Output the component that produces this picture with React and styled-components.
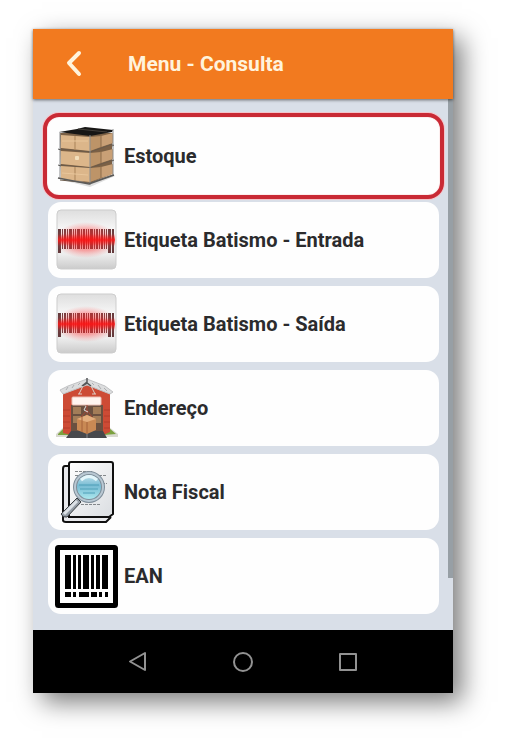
import React from "react";
import styled, { createGlobalStyle, css } from "styled-components";

const GlobalStyle = createGlobalStyle`
  *, *::before, *::after { box-sizing: border-box; }
  body {
    margin: 0;
    background: #fff;
    font-family: Roboto, "Liberation Sans", sans-serif;
  }
`;

const Page = styled.main`
  padding: 29px 73px 57px 33px;
`;

const Device = styled.section`
  display: flex;
  flex-direction: column;
  background: #d9dfe8;
  box-shadow: 9px 9px 24px rgba(0, 0, 0, 0.52);
`;

const Header = styled.header`
  position: relative;
  display: flex;
  align-items: center;
  gap: 29px;
  min-height: 70px;
  padding: 0 24px;
  background: #f27a1f;
  box-shadow: 0 1px 3px rgba(0, 0, 0, 0.55);
`;

const BackButton = styled.button`
  display: grid;
  place-items: center;
  width: 42px;
  height: 42px;
  padding: 0;
  border: 0;
  background: none;
  color: #fff3dc;
`;

const Title = styled.h1`
  margin: 0;
  color: #fff3dc;
  font-size: 21px;
  line-height: 24px;
  font-weight: 700;
`;

const Body = styled.div`
  display: flex;
`;

const List = styled.ul`
  flex: 1;
  display: flex;
  flex-direction: column;
  gap: 8px;
  margin: 0;
  padding: 19px 9px 16px 15px;
  list-style: none;
`;

const Card = styled.button`
  display: flex;
  align-items: center;
  gap: 6px;
  width: 100%;
  min-height: 76px;
  padding: 6px;
  border: 0;
  border-radius: 13px;
  background: #fefefe;
  color: #2b2b2d;
  font-family: inherit;
  font-size: 20px;
  line-height: 24px;
  font-weight: 700;
  text-align: left;
  ${({ $highlighted }) =>
    $highlighted &&
    css`
      border-radius: 11px;
      outline: 4px solid #c92a35;
      outline-offset: 1px;
      box-shadow: 0 0 0 1px #fdeeee, 0 0 0 6px #f3c5cb;
    `}
`;

const CardIcon = styled.svg`
  flex: none;
  width: 64px;
  height: 64px;
`;

const ScrollTrack = styled.div`
  width: 5px;
  padding-bottom: 52px;
`;

const ScrollThumb = styled.div`
  height: 100%;
  background: #979fa5;
`;

const NavBar = styled.nav`
  display: flex;
  justify-content: center;
  min-height: 63px;
  background: #000;
`;

const NavButton = styled.button`
  display: grid;
  place-items: center;
  width: 25%;
  padding: 0;
  border: 0;
  background: none;
  color: #929292;
`;

const Crate = ({ y }) => (
  <g>
    <path d={`M7 ${y}L36 ${y + 2}V${y + 16}L7 ${y + 13}Z`} fill="#dcb68a" />
    <path d={`M36 ${y + 2}L47 ${y + 1}V${y + 12}L36 ${y + 16}Z`} fill="#bd9468" />
    <path d={`M47 ${y + 1}L59 ${y - 2}V${y + 8}L47 ${y + 12}Z`} fill="#c9a076" />
    <path d={`M6 ${y + 14}L36 ${y + 17}L59 ${y + 9}`} fill="none" stroke="#6c5b4a" />
    <path d={`M47 ${y}V${y + 12}`} stroke="#8d6c4a" />
  </g>
);

const StockIcon = () => (
  <CardIcon viewBox="0 0 64 64" aria-hidden="true">
    <path d="M8 56L36 63L61 52L52 50Z" fill="#dedede" />
    <path d="M6 9H58V50L36 59L7 54Z" fill="#7b6045" />
    <Crate y={11} />
    <Crate y={27} />
    <Crate y={42} />
    <path d="M21 12V26M21 43V57" stroke="#a98358" />
    <path d="M8 17H34M8 49L34 51" stroke="#e8c69b" />
    <path d="M5 8L23 5L31 3L59 6L58 8L36 12Z" fill="#171615" />
    <path d="M24 5L53 8" stroke="#44403b" />
    <rect x="21" y="32" width="4" height="4" rx="1" fill="#f3dfbb" />
    <path d="M6 8V55M36 11V61M59 5V51" fill="none" stroke="#8b8d8e" />
    <path d="M4 54L35 60L60 51" fill="none" stroke="#5b5a58" strokeWidth="1.500" />
    <path d="M4 41L7 42M4 25L7 26M58 22L60 21M58 37L60 36" fill="none" stroke="#5b5a58" />
  </CardIcon>
);

const scannerBars = [
  [4, 3], [8, 1], [10, 2], [13, 1], [15, 3], [19, 1], [21, 1], [23, 3], [27, 1],
  [29, 2], [32, 1], [34, 1], [36, 3], [40, 1], [42, 2], [45, 1], [47, 2], [50, 1], [52, 1], [54, 3], [58, 2],
];

const ScannerIcon = () => (
  <CardIcon viewBox="0 0 64 64" aria-hidden="true">
    <defs>
      <linearGradient id="tile" x2="0" y2="1">
        <stop offset="0" stopColor="#dedede" />
        <stop offset="0.35" stopColor="#f8f8f8" />
        <stop offset="0.75" stopColor="#ededed" />
        <stop offset="1" stopColor="#cbcbcb" />
      </linearGradient>
      <radialGradient id="glow">
        <stop offset="0" stopColor="#ff1a1a" stopOpacity="0.75" />
        <stop offset="0.6" stopColor="#ff3434" stopOpacity="0.4" />
        <stop offset="1" stopColor="#ff6060" stopOpacity="0" />
      </radialGradient>
      <linearGradient id="beam" x2="0" y2="1">
        <stop offset="0" stopColor="#fa1515" stopOpacity="0" />
        <stop offset="0.5" stopColor="#fa1515" stopOpacity="0.9" />
        <stop offset="1" stopColor="#fa1515" stopOpacity="0" />
      </linearGradient>
    </defs>
    <rect x="3" y="2" width="59" height="59" rx="4" fill="url(#tile)" stroke="#cdcdcd" />
    {scannerBars.map(([x, w]) => (
      <rect key={x} x={x} y="21" width={w} height={x < 8 || x > 53 ? 24 : 20} fill="#653a3c" />
    ))}
    <ellipse cx="32" cy="32" rx="32" ry="18" fill="url(#glow)" />
    <rect x="4" y="26" width="57" height="12" fill="url(#beam)" />
  </CardIcon>
);

const WarehouseIcon = () => (
  <CardIcon viewBox="0 0 64 64" aria-hidden="true">
    <path d="M2 58L10 51H55L64 58V61H2Z" fill="#d8d9cf" />
    <path d="M4 58L10 52H17V59H4ZM48 52H55L62 58L50 59Z" fill="#7ba13f" />
    <path d="M9 17L33 6L56 17V56L49 59V29H17V59L9 57Z" fill="#cd4b35" />
    <path d="M9 34H16M9 40H16M9 46H16M9 52H16M50 34H56M50 40H56M50 46H56M50 52H56" stroke="#b43c2a" />
    <rect x="17" y="29" width="32" height="28" fill="#6a5040" />
    <path d="M19 31H27V38H19ZM39 31H47V38H39ZM19 40H27V47H19ZM39 40H47V47H39Z" fill="#a37d58" />
    <path d="M17 55H49L53 62H12Z" fill="#47484c" />
    <path d="M33 57V62" stroke="#85868a" />
    <path d="M6 14L14 10L33 3L51 10L59 16L56 18L33 9L9 18Z" fill="#dcddde" stroke="#c1c2c4" />
    <path d="M12 14L14 11M18 12L20 9M24 9L26 7M40 9L38 7M47 13L44 9M53 15L50 12" stroke="#adafb1" />
    <path d="M33 2V6L28 10L33 7L37 10" fill="none" stroke="#555759" strokeWidth="1.500" />
    <path d="M29 10L25 18M37 10L41 18M24 18H28M38 18H42" fill="none" stroke="#ddd0c8" />
    <rect x="18" y="21" width="29" height="8" rx="1" fill="#fff5f0" stroke="#ecc2b8" />
    <path d="M23 43L33 39L42 43V54L33 58L23 54Z" fill="#c98954" />
    <path d="M23 43L33 46L42 43L33 39Z" fill="#e3ae7e" />
    <path d="M33 46V58M28 41V56" fill="none" stroke="#a5623a" />
    <path d="M27 41L33 34L38 41M33 29V39" fill="none" stroke="#a44736" />
    <path d="M32 30L30 34L34 36" fill="none" stroke="#ddd" />
  </CardIcon>
);

const InvoiceIcon = () => (
  <CardIcon viewBox="0 0 64 64" aria-hidden="true">
    <defs>
      <linearGradient id="sheet" x2="1" y2="1">
        <stop offset="0" stopColor="#fff" />
        <stop offset="1" stopColor="#dadde1" />
      </linearGradient>
      <linearGradient id="lens" x2="0" y2="1">
        <stop offset="0" stopColor="#d2eaf2" />
        <stop offset="0.45" stopColor="#77bbd3" />
        <stop offset="1" stopColor="#b2edf1" />
      </linearGradient>
    </defs>
    <path d="M14 6H11Q9 6 9 9V60Q9 62 12 62H52L57 57" fill="#e8e9ec" stroke="#101010" strokeWidth="2" />
    <path d="M17 2H57Q59 2 59 4V54L55 57H15V4Q15 2 17 2Z" fill="url(#sheet)" stroke="#101010" strokeWidth="2" />
    <path d="M21 11.500H38M21 15.500H53M48 23.500H53M27 44.500H46" stroke="#84888b" strokeDasharray="3 1" />
    <circle cx="35" cy="27" r="14" fill="url(#lens)" stroke="#7e8d99" strokeWidth="4" />
    <circle cx="35" cy="27" r="14" fill="none" stroke="#b9c8d3" strokeWidth="2" />
    <path d="M25 25H45M26 29H44M29 33H41" stroke="#4e9fb8" />
    <path d="M27 20Q35 13 43 20" fill="none" stroke="#e4f6fb" strokeWidth="3" />
    <path d="M23 38L27 42L13 57Q9 58 7 54Z" fill="#939ca5" stroke="#3a3e42" />
    <path d="M23 41L10 54" stroke="#dce1e6" strokeWidth="3" />
  </CardIcon>
);

const EanIcon = () => (
  <CardIcon viewBox="0 0 64 64" aria-hidden="true">
    <rect x="3.500" y="3.500" width="58" height="58" rx="1" fill="#fff" stroke="#000" strokeWidth="5" />
    <path d="M11 11H17V45H11ZM19 11H22V45H19ZM24 11H27V45H24ZM29 11H35V45H29ZM37 11H40V45H37ZM42 11H46V45H42ZM48 11H54V45H48Z" />
    <path d="M11 48H17V53H11ZM19 48H22V53H19ZM25 48H35V53H25ZM37 48H43V53H37ZM45 48H48V53H45ZM51 48H54V53H51Z" />
  </CardIcon>
);

const items = [
  { label: "Estoque", Icon: StockIcon, highlighted: true },
  { label: "Etiqueta Batismo - Entrada", Icon: ScannerIcon },
  { label: "Etiqueta Batismo - Saída", Icon: ScannerIcon },
  { label: "Endereço", Icon: WarehouseIcon },
  { label: "Nota Fiscal", Icon: InvoiceIcon },
  { label: "EAN", Icon: EanIcon },
];

const navItems = [
  { label: "Voltar", shape: <path d="M19 3V20L4 11.500Z" /> },
  { label: "Início", shape: <circle cx="12" cy="12" r="9" /> },
  { label: "Recentes", shape: <rect x="4" y="4" width="16" height="16" /> },
];

export default function App() {
  return (
    <>
      <GlobalStyle />
      <Page>
        <Device>
          <Header>
            <BackButton type="button" aria-label="Voltar ao menu anterior">
              <svg width="24" height="30" viewBox="0 0 24 30" fill="none" stroke="currentColor" strokeWidth="4" strokeLinecap="round" strokeLinejoin="round" aria-hidden="true">
                <path d="M13 4L3 14L13 25" />
              </svg>
            </BackButton>
            <Title>Menu - Consulta</Title>
          </Header>
          <Body>
            <List>
              {items.map(({ label, Icon, highlighted }) => (
                <li key={label}>
                  <Card type="button" $highlighted={highlighted}>
                    <Icon />
                    {label}
                  </Card>
                </li>
              ))}
            </List>
            <ScrollTrack>
              <ScrollThumb />
            </ScrollTrack>
          </Body>
          <NavBar aria-label="Navegação do sistema">
            {navItems.map(({ label, shape }) => (
              <NavButton key={label} type="button" aria-label={label}>
                <svg width="24" height="24" viewBox="0 0 24 24" fill="none" stroke="currentColor" strokeWidth="2" strokeLinejoin="round" aria-hidden="true">
                  {shape}
                </svg>
              </NavButton>
            ))}
          </NavBar>
        </Device>
      </Page>
    </>
  );
}
